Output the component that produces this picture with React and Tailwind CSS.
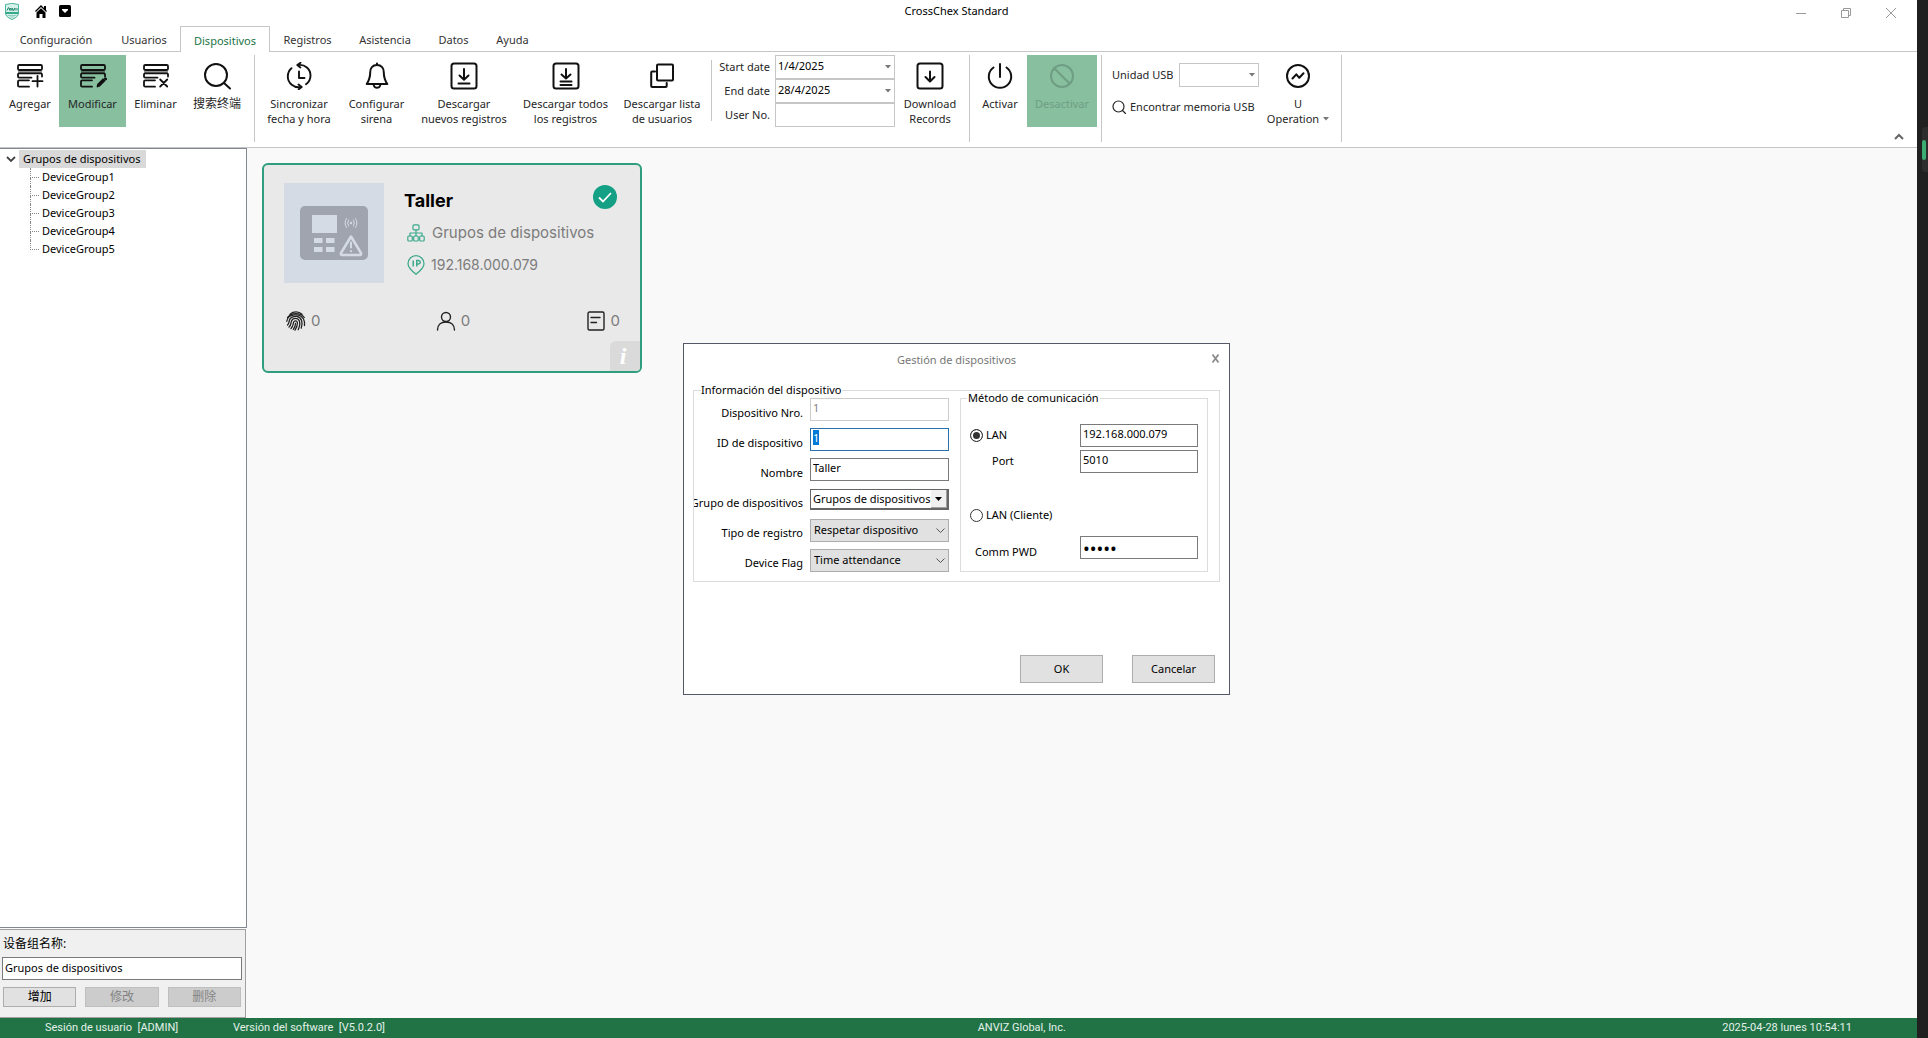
import { useEffect, useRef } from "react";

const Svg = ({ size = 28, children, ...rest }) => (
  <svg
    width={size}
    height={size}
    viewBox={`0 0 ${size} ${size}`}
    fill="none"
    stroke="currentColor"
    strokeWidth="2"
    strokeLinecap="round"
    strokeLinejoin="round"
    aria-hidden="true"
    {...rest}
  >
    {children}
  </svg>
);

/* ---------- ribbon icons ---------- */

const ListBase = ({ children }) => (
  <Svg strokeWidth="1.8">
    <path d="M2 8.5h24v2.5H2z" fill="currentColor" fillOpacity=".45" stroke="none" />
    <rect x="2" y="3" width="24" height="5" rx="1.2" />
    <path d="M26 14.5v-2a1.2 1.2 0 0 0-1.2-1.2H3.2A1.2 1.2 0 0 0 2 12.5v2a1.2 1.2 0 0 0 1.2 1.2H15.5" />
    <path d="M13 18.3H3.2A1.2 1.2 0 0 0 2 19.5v4a1.2 1.2 0 0 0 1.2 1.2H13" />
    {children}
  </Svg>
);
const AddIcon = () => (
  <ListBase>
    <path d="M21.5 14v10.5M16.5 19.2h10" />
  </ListBase>
);
const EditIcon = () => (
  <ListBase>
    <path d="M18.5 24.5l.6-2.2 5-5 1.4 1.4-5 5z" fill="currentColor" />
    <path d="M26.3 16.6l.4.4" strokeWidth="2.6" />
  </ListBase>
);
const DeleteIcon = () => (
  <ListBase>
    <path d="M18.2 17.5l7 7M25.2 17.5l-7 7" />
  </ListBase>
);
const SearchIcon = () => (
  <Svg>
    <circle cx="13" cy="13" r="11" />
    <path d="M21 21l6 5.5" />
  </Svg>
);
const SyncIcon = () => (
  <Svg strokeWidth="1.9">
    <path d="M13 3c7-1 12.5 4 12.5 10.5 0 4-2 7-4.500 8.800" />
    <path d="M16 25C9 26.500 2.800 21 2.800 14.500c0-3.500 1.500-6.500 3.700-8.300" />
    <path d="M15.500.8L12.300 3l3 2.500M13.500 22.500l3.200 2.500-3 2.200" />
    <path d="M14 9.500v6.500h5.500" />
  </Svg>
);
const BellIcon = () => (
  <Svg>
    <path d="M14 2.500v-1M14 3c-4.500 0-6.800 3.200-6.800 7.500 0 6-1.500 8.500-3.500 11.500h20.600c-2-3-3.500-5.500-3.500-11.500C20.800 6.200 18.500 3 14 3z" />
    <path d="M10.800 23.500c.6 1.700 1.800 2.300 3.200 2.300s2.600-.6 3.200-2.300" />
  </Svg>
);
const BoxDown = ({ children }) => (
  <Svg>
    <rect x="1.5" y="1.5" width="25" height="25" rx="2.5" />
    {children}
  </Svg>
);
const DownOneIcon = () => (
  <BoxDown>
    <path d="M14 7v10.500M9.500 13.500l4.500 4.200 4.500-4.200M8.500 21.500h11" />
  </BoxDown>
);
const DownAllIcon = () => (
  <BoxDown>
    <path d="M14 7v9M9.500 12.500l4.500 4 4.500-4M8.500 19.500h11M8.500 23h11" />
  </BoxDown>
);
const DownIcon = () => (
  <BoxDown>
    <path d="M14 9.500v9.500M9.500 15l4.500 4.500 4.500-4.500" />
  </BoxDown>
);
const CopyIcon = () => (
  <Svg>
    <rect x="9" y="2.5" width="16" height="16" rx="1" />
    <path d="M7 9.500H4.200a1 1 0 0 0-1 1V24a1 1 0 0 0 1 1h13.500a1 1 0 0 0 1-1v-3" />
  </Svg>
);
const PowerIcon = () => (
  <Svg>
    <path d="M14 2v13M7.500 5.500a11.200 11.200 0 1 0 13 0" />
  </Svg>
);
const BanIcon = () => (
  <Svg>
    <circle cx="14" cy="14" r="11" />
    <path d="M6.200 6.200l15.600 15.600" />
  </Svg>
);
const PulseIcon = () => (
  <Svg>
    <circle cx="14" cy="14" r="11" />
    <path d="M8.500 16.500l3.800-4.200 3 3.500 4.200-4.500" />
  </Svg>
);

/* ---------- shared controls ---------- */

const Caret = ({ className = "" }) => (
  <svg width="6" height="4" viewBox="0 0 6 4" className={className} aria-hidden="true">
    <path d="M0 0h6L3 3.500z" fill="#777" />
  </svg>
);

function RibbonButton({ icon, lines, width, textSize = "", active, disabled, menu }) {
  return (
    <button
      type="button"
      disabled={disabled}
      className={`flex h-[72px] shrink-0 flex-col items-center pt-[7px] ${width} ${
        active ? "bg-[#87bf9f]" : ""
      } ${disabled ? "text-[#6f9e84]" : "text-[#262626]"}`}
    >
      <span className={disabled ? "" : "text-[#111]"}>{icon}</span>
      <span className={`mt-1.5 text-center whitespace-nowrap ${textSize}`}>
        {lines.map((line, i) => (
          <span key={line} className="block leading-[15px]">
            {line}
            {menu && i === lines.length - 1 && <Caret className="mb-[3px] ml-1 inline-block" />}
          </span>
        ))}
      </span>
    </button>
  );
}

const Separator = ({ className = "" }) => (
  <div className={`w-px shrink-0 bg-[#c6c6c6] ${className}`} />
);

function RibbonCombo({ id, value, width }) {
  return (
    <div className={`relative ${width}`}>
      <select
        id={id}
        className="h-6 w-full appearance-none border border-[#c6c6c6] bg-white pr-4 pb-0.5 pl-0.5 text-black"
      >
        <option>{value}</option>
      </select>
      <Caret className="pointer-events-none absolute top-2.5 right-1" />
    </div>
  );
}

/* ---------- window chrome ---------- */

function TitleBar() {
  return (
    <header className="grid h-[26px] grid-cols-3 pr-1">
      <div className="flex items-start gap-4 pl-[5px]">
        <svg width="14" height="17" viewBox="0 0 14 17" className="mt-[3px]" aria-hidden="true">
          <path d="M.5 1.500Q7-.8 13.500 1.500V10q0 4-6.500 6.500Q.5 14 .5 10z" fill="#d8f1ea" stroke="#4fb59c" />
          <path d="M.5 9h13v2H.5z" fill="#36a98c" />
          <path d="M2 7.500L3.500 4.500 5 7.500V5l2 2.500V5l1.500 2.500L10 5v2.500M12 5v2.500" fill="none" stroke="#23876d" />
          <path d="M2.500 12.500h9M4.500 14h5" stroke="#8fd0c0" />
        </svg>
        <button type="button" aria-label="Inicio" className="mt-[5px]">
          <svg width="12" height="13" viewBox="0 0 12 13">
            <path d="M9 1h2v4H9z" />
            <path d="M6 0l6 6-.9 1L6 2 .9 7 0 6z" />
            <path d="M6 3.200l4.500 4.300V13H7.500V9h-3v4h-3V7.500z" />
          </svg>
        </button>
        <button type="button" aria-label="Personalizar" className="mt-[5px] -ml-1">
          <svg width="12" height="12" viewBox="0 0 12 12">
            <rect width="12" height="12" rx="1.5" />
            <path d="M3 4h6v1L6 8 3 5z" fill="#fff" />
          </svg>
        </button>
      </div>
      <h1 className="pt-[3px] text-center leading-[15px] text-black">CrossChex Standard</h1>
      <div className="flex justify-end text-[#9a9a9a]">
        <button type="button" aria-label="Minimizar" className="grid w-[45px] place-items-center">
          <svg width="10" height="10"><path d="M0 5.500h10" stroke="currentColor" /></svg>
        </button>
        <button type="button" aria-label="Restaurar" className="grid w-[45px] place-items-center">
          <svg width="10" height="10" fill="none" stroke="currentColor">
            <path d="M.5 2.500h7v7h-7zM2.500 2.500v-2h7v7h-2" />
          </svg>
        </button>
        <button type="button" aria-label="Cerrar" className="grid w-[45px] place-items-center">
          <svg width="10" height="10"><path d="M0 0l10 10M10 0L0 10" stroke="currentColor" /></svg>
        </button>
      </div>
    </header>
  );
}

const TABS = [
  ["Configuración", "w-[104px]"],
  ["Usuarios", "w-[72px]"],
  ["Dispositivos", "w-[90px]"],
  ["Registros", "w-[75px]"],
  ["Asistencia", "w-[80px]"],
  ["Datos", "w-[57px]"],
  ["Ayuda", "w-[61px]"],
];

function Tabs() {
  return (
    <nav className="flex h-[26px]">
      <div className="w-1 border-b border-[#c6c6c6]" />
      {TABS.map(([name, width]) => (
        <button
          key={name}
          type="button"
          className={`${width} border-[#c6c6c6] pt-1 ${
            name === "Dispositivos" ? "border border-b-0 text-[#217346]" : "border-b text-[#333]"
          }`}
        >
          {name}
        </button>
      ))}
      <div className="flex-1 border-b border-[#c6c6c6]" />
    </nav>
  );
}

function Ribbon() {
  return (
    <section className="flex h-24 items-start border-b border-[#c6c6c6] pt-[3px] text-[#262626]">
      <div className="flex pl-px">
        <RibbonButton icon={<AddIcon />} lines={["Agregar"]} width="w-[58px]" />
        <RibbonButton icon={<EditIcon />} lines={["Modificar"]} width="w-[67px]" active />
        <RibbonButton icon={<DeleteIcon />} lines={["Eliminar"]} width="w-[59px]" />
        <RibbonButton icon={<SearchIcon />} lines={["搜索终端"]} width="w-[64px]" textSize="text-xs" />
      </div>
      <Separator className="ml-[5px] h-[87px]" />
      <div className="flex pl-[3px]">
        <RibbonButton icon={<SyncIcon />} lines={["Sincronizar", "fecha y hora"]} width="w-[82px]" />
        <RibbonButton icon={<BellIcon />} lines={["Configurar", "sirena"]} width="w-[73px]" />
        <RibbonButton icon={<DownOneIcon />} lines={["Descargar", "nuevos registros"]} width="w-[102px]" />
        <RibbonButton icon={<DownAllIcon />} lines={["Descargar todos", "los registros"]} width="w-[101px]" />
        <RibbonButton icon={<CopyIcon />} lines={["Descargar lista", "de usuarios"]} width="w-[92px]" />
      </div>
      <Separator className="mt-[5px] ml-[3px] h-[61px]" />
      <div className="grid grid-cols-[58px_120px] items-center gap-x-[5px]">
        <label htmlFor="start" className="text-right">Start date</label>
        <RibbonCombo id="start" value="1/4/2025" width="w-full" />
        <label htmlFor="end" className="text-right">End date</label>
        <RibbonCombo id="end" value="28/4/2025" width="w-full" />
        <label htmlFor="userno" className="text-right">User No.</label>
        <input id="userno" className="h-6 w-full border border-[#c6c6c6] bg-white px-1" />
      </div>
      <RibbonButton icon={<DownIcon />} lines={["Download", "Records"]} width="w-[70px]" />
      <Separator className="ml-1 h-[87px]" />
      <div className="flex pl-[3px]">
        <RibbonButton icon={<PowerIcon />} lines={["Activar"]} width="w-[54px]" />
        <RibbonButton icon={<BanIcon />} lines={["Desactivar"]} width="w-[70px]" active disabled />
      </div>
      <Separator className="ml-1 h-[87px]" />
      <div className="flex w-[157px] flex-col gap-3 pt-2 pl-2.5">
        <div className="flex items-center justify-between">
          <label htmlFor="usb">Unidad USB</label>
          <RibbonCombo id="usb" value="" width="w-20" />
        </div>
        <button type="button" className="flex items-center gap-1 leading-4 whitespace-nowrap">
          <Svg size={14} strokeWidth="1.2">
            <circle cx="6.5" cy="6.5" r="5.5" />
            <path d="M10.500 10.500l3 3" />
          </Svg>
          Encontrar memoria USB
        </button>
      </div>
      <RibbonButton icon={<PulseIcon />} lines={["U", "Operation"]} width="w-[78px]" menu />
      <Separator className="ml-1 h-[87px]" />
      <button type="button" aria-label="Contraer cinta" className="mt-auto mr-[13px] mb-1.5 ml-auto">
        <svg width="10" height="8" viewBox="0 0 10 8" fill="none" stroke="#666" strokeWidth="2">
          <path d="M1 6l4-4 4 4" />
        </svg>
      </button>
    </section>
  );
}

/* ---------- left panel ---------- */

const GROUPS = ["DeviceGroup1", "DeviceGroup2", "DeviceGroup3", "DeviceGroup4", "DeviceGroup5"];

function Sidebar() {
  return (
    <aside className="flex w-[247px] shrink-0 flex-col">
      <div className="flex-1 border-t border-r border-b border-[#828790] bg-white pt-px text-black">
        <div className="flex h-[18px] items-center">
          <svg width="10" height="7" viewBox="0 0 10 7" fill="none" stroke="#444" strokeWidth="1.8" className="mr-[3px] ml-1.5">
            <path d="M1 1l4 4 4-4" />
          </svg>
          <span className="bg-[#d9d9d9] pr-1.5 pl-1 leading-[18px]">Grupos de dispositivos</span>
        </div>
        <ul className="pl-[30px]">
          {GROUPS.map((group, i) => (
            <li key={group} className="flex h-[18px] items-center gap-[3px]">
              <span className="h-[18px] w-[9px]">
                <span className="block h-2.5 border-b border-l border-dotted border-[#888]" />
                {i < GROUPS.length - 1 && (
                  <span className="block h-2 border-l border-dotted border-[#888]" />
                )}
              </span>
              {group}
            </li>
          ))}
        </ul>
      </div>
      <form className="mt-px mr-px flex h-[89px] flex-col border-t border-r border-b border-[#a0a0a0] bg-[#f0f0f0] text-black">
        <label htmlFor="group" className="pt-1.5 pl-[3px] text-xs leading-4">
          设备组名称:
        </label>
        <input
          id="group"
          defaultValue="Grupos de dispositivos"
          className="mt-[5px] mr-[3px] ml-0.5 h-[23px] border border-[#7a7a7a] bg-white px-0.5 pb-0.5"
        />
        <div className="mt-[7px] mr-1 ml-[3px] grid grid-cols-3 gap-[9px] text-xs">
          <button type="button" className="h-5 border border-[#adadad] bg-[#e1e1e1] leading-none">增加</button>
          <button type="button" disabled className="h-5 border border-[#bfbfbf] bg-[#cccccc] leading-none text-[#838383]">修改</button>
          <button type="button" disabled className="h-5 border border-[#bfbfbf] bg-[#cccccc] leading-none text-[#838383]">删除</button>
        </div>
      </form>
    </aside>
  );
}

/* ---------- device card ---------- */

const TerminalPicture = () => (
  <svg width="68" height="54" viewBox="0 0 68 54" aria-hidden="true">
    <rect width="68" height="54" rx="5" fill="#a0a4ae" />
    <g fill="#d5dbe5">
      <path d="M12 9h25v18H12zM14 32h8.500v5H14zM26 32h8.500v5H26zM14 41h8.500v5H14zM26 41h8.500v5H26z" />
      <circle cx="51" cy="17" r="1.2" />
    </g>
    <g fill="none" stroke="#d5dbe5" strokeLinecap="round" strokeLinejoin="round">
      <path d="M48.500 14q-1.800 3 0 6M53.500 14q1.800 3 0 6M46.500 12.500q-3 4.500 0 9M55.500 12.500q3 4.500 0 9" />
      <path d="M51 30.500L41 47q-.6 2 1 2h18q1.600 0 1-2z" strokeWidth="2.5" />
      <path d="M51 36.500v5" strokeWidth="2" />
      <path d="M51 45v.3" strokeWidth="2" />
    </g>
  </svg>
);

const FingerprintIcon = () => (
  <Svg size={20} strokeWidth="1.3" className="text-[#222]">
    <path d="M4 3.200C7.500.1 12.800.1 16 3.200" />
    <path d="M1.500 6.500C5 1.200 15 1.200 18.300 6.500" />
    <path d="M.8 10.300C1.500 3 14 1.500 17.500 8c1.200 2.300 1.300 4.500 1 6.500" />
    <path d="M1.500 14C4 12 2.200 9.500 4.500 7.300 8 4 14 5 15.600 9.500c.8 2.500.5 5-.4 7.700" />
    <path d="M3 16c2.500-2 1.700-4 2.500-6C7 6.500 12 6.500 13.400 10c.8 2.500.2 5.700-1.200 8.700" />
    <path d="M5 17.500c2.500-2.500 2-4.500 2.600-6.300.8-2 3.300-1.700 3.700.2.400 2.600-.6 5.200-2.300 7.700" />
    <path d="M9.500 12.500c0 2.200-.8 4-2.200 5.800" />
  </Svg>
);

function DeviceCard() {
  return (
    <article className="relative w-[380px] overflow-hidden rounded-md border-2 border-[#2f9e80] bg-[#e9e9e9] px-5 pt-[18px] pb-10 font-[Inter,sans-serif] text-[15px] text-[#7c7c7c]">
      <div className="flex gap-5">
        <div className="grid h-[100px] w-[100px] shrink-0 place-items-center bg-[#d5dbe5]">
          <TerminalPicture />
        </div>
        <div className="flex-1">
          <div className="flex items-center justify-between pt-0.5 pr-[3px]">
            <h2 className="pt-1 text-lg leading-6 font-bold text-black">Taller</h2>
            <svg width="24" height="24" viewBox="0 0 24 24" className="mb-1" aria-hidden="true">
              <circle cx="12" cy="12" r="12" fill="#14a085" />
              <path d="M6 12.500l4 4 8-8.500" fill="none" stroke="#fff" strokeWidth="1.8" />
            </svg>
          </div>
          <p className="mt-2.5 flex items-center gap-[7px] pl-[3px] leading-5 whitespace-nowrap">
            <Svg size={18} strokeWidth="1.2" className="text-[#3aa98a]">
              <rect x="6" y=".8" width="6" height="5" rx="1" />
              <rect x=".8" y="12" width="4.5" height="5" rx="1" />
              <rect x="6.7" y="12" width="4.5" height="5" rx="1" />
              <rect x="12.7" y="12" width="4.5" height="5" rx="1" />
              <path d="M9 6v6M3 12V9h12v3" />
            </Svg>
            Grupos de dispositivos
          </p>
          <p className="mt-3 flex items-center gap-1.5 pl-[3px] text-sm leading-5">
            <svg width="18" height="20" viewBox="0 0 18 20" fill="none" stroke="#3aa98a" strokeWidth="1.3" aria-hidden="true">
              <path d="M9 19.200Q1 13 1 8.700a8 8 0 0 1 16 0Q17 13 9 19.200z" />
              <path d="M6.200 5.500v6M9.800 11.500v-6h1.700a1.700 1.700 0 0 1 0 3.500H9.800" strokeWidth="1.5" />
            </svg>
            192.168.000.079
          </p>
        </div>
      </div>
      <div className="mt-7 flex items-center justify-between">
        <span className="flex items-center gap-[5px] pl-0.5 leading-5">
          <FingerprintIcon />0
        </span>
        <span className="flex items-center gap-[5px] leading-5">
          <Svg size={20} strokeWidth="1.4" className="text-[#222]">
            <circle cx="10" cy="6" r="4.5" />
            <path d="M1.500 19c0-5 3.500-8 8.500-8s8.500 3 8.500 8" />
          </Svg>
          0
        </span>
        <span className="flex items-center gap-[5px] leading-5">
          <Svg size={20} strokeWidth="1.4" className="text-[#222]">
            <rect x="2" y="1" width="16" height="18" rx="1.5" />
            <path d="M5 6.500h9M5 11.500h5.500" />
          </Svg>
          0
        </span>
      </div>
      <button
        type="button"
        aria-label="Información"
        className="absolute right-0 bottom-0 h-[30px] w-[30px] rounded-tl-md bg-[#dadada] pr-1 font-['Liberation_Serif',serif] text-2xl leading-none font-bold text-white italic"
      >
        i
      </button>
    </article>
  );
}

/* ---------- dialog ---------- */

const FIELD = "h-[23px] w-full border bg-white px-0.5 pb-1";

function Row({ id, label, children }) {
  return (
    <div className="grid h-[30px] grid-cols-[109px_139px] items-start gap-[7px]">
      <label htmlFor={id} className="flex justify-end overflow-hidden pt-[7px] leading-4 whitespace-nowrap">
        {label}
      </label>
      {children}
    </div>
  );
}

function FlatSelect({ id, value }) {
  return (
    <div className="relative mt-px">
      <select id={id} className="h-[23px] w-full appearance-none border border-[#adadad] bg-[#e1e1e1] pb-px pl-[3px] text-black">
        <option>{value}</option>
      </select>
      <svg width="9" height="6" viewBox="0 0 9 6" fill="none" stroke="#555" className="pointer-events-none absolute top-[9px] right-1">
        <path d="M.5 .5l4 4 4-4" />
      </svg>
    </div>
  );
}

const RADIO =
  "h-[13px] w-[13px] appearance-none rounded-full border border-[#333] bg-white checked:bg-[#333] checked:shadow-[inset_0_0_0_2px_white]";

function DeviceDialog() {
  const idField = useRef(null);
  useEffect(() => {
    idField.current.focus();
    idField.current.select();
  }, []);

  return (
    <div
      role="dialog"
      aria-labelledby="dialog-title"
      className="w-[547px] border border-[#555866] bg-white px-[9px] pb-[11px] text-black"
    >
      <div className="grid h-[39px] grid-cols-[1fr_auto_1fr] items-start">
        <h2 id="dialog-title" className="col-start-2 pt-2 leading-4 text-[#777]">
          Gestión de dispositivos
        </h2>
        <button type="button" aria-label="Cerrar" className="justify-self-end pt-[9px]">
          <svg width="9" height="11" viewBox="0 0 9 11" fill="none" stroke="#8c8c8c" strokeWidth="1.8">
            <path d="M1.500 1.500l6 8M7.500 1.500l-6 8" />
          </svg>
        </button>
      </div>

      <fieldset className="border border-[#dcdcdc] pb-[3px]">
        <legend className="ml-[7px] h-[14px] leading-[14px]">Información del dispositivo</legend>
        <div className="flex gap-[11px]">
          <div className="pt-px">
            <Row id="number" label="Dispositivo Nro.">
              <input id="number" disabled defaultValue="1" className={`${FIELD} border-[#cccccc] text-[#838383]`} />
            </Row>
            <Row id="device-id" label="ID de dispositivo">
              <input
                id="device-id"
                ref={idField}
                defaultValue="1"
                className={`${FIELD} border-[#2a6fa8] outline-none selection:bg-[#0078d7] selection:text-white`}
              />
            </Row>
            <Row id="name" label="Nombre">
              <input id="name" defaultValue="Taller" className={`${FIELD} border-[#7a7a7a]`} />
            </Row>
            <Row id="device-group" label="Grupo de dispositivos">
              <div className="relative mt-px">
                <select id="device-group" className="h-[21px] w-full appearance-none border border-r-2 border-b-2 border-[#666] bg-white pl-0.5 text-black">
                  <option>Grupos de dispositivos</option>
                </select>
                <span className="pointer-events-none absolute top-px right-0.5 grid h-[18px] w-4 place-items-center border-r border-b border-[#a0a0a0] bg-[#f0f0f0]">
                  <svg width="7" height="4" viewBox="0 0 7 4"><path d="M0 0h7L3.500 4z" /></svg>
                </span>
              </div>
            </Row>
            <Row id="record-type" label="Tipo de registro">
              <FlatSelect id="record-type" value="Respetar dispositivo" />
            </Row>
            <Row id="flag" label="Device Flag">
              <FlatSelect id="flag" value="Time attendance" />
            </Row>
          </div>

          <fieldset className="-mt-1.5 h-[181px] w-[248px] border border-[#dcdcdc] pr-2 pl-[9px]">
            <legend className="-ml-[3px] h-[14px] px-px leading-[14px]">Método de comunicación</legend>
            <div className="grid grid-cols-[110px_118px] gap-y-[3px] pt-[19px]">
              <label className="flex items-center gap-[3px]">
                <input type="radio" name="method" defaultChecked className={RADIO} />
                LAN
              </label>
              <input aria-label="Dirección IP" defaultValue="192.168.000.079" className={`${FIELD} border-[#7a7a7a]`} />
              <label htmlFor="port" className="self-center pl-[22px]">Port</label>
              <input id="port" defaultValue="5010" className={`${FIELD} border-[#7a7a7a]`} />
            </div>
            <label className="mt-[34px] flex h-4 items-center gap-[3px]">
              <input type="radio" name="method" className={RADIO} />
              LAN (Cliente)
            </label>
            <div className="mt-[13px] grid grid-cols-[110px_118px]">
              <label htmlFor="pwd" className="pt-2 pl-[5px] leading-4">Comm PWD</label>
              <input
                id="pwd"
                type="password"
                defaultValue="12345"
                className="h-[23px] w-full border border-[#7a7a7a] bg-white px-0.5 text-lg leading-none"
              />
            </div>
          </fieldset>
        </div>
      </fieldset>

      <div className="mt-[73px] flex justify-end gap-[29px] pr-[5px]">
        <button type="button" className="h-7 w-[83px] border border-[#adadad] bg-[#e1e1e1]">OK</button>
        <button type="button" className="h-7 w-[83px] border border-[#adadad] bg-[#e1e1e1]">Cancelar</button>
      </div>
    </div>
  );
}

function StatusBar() {
  return (
    <footer className="flex h-5 items-center bg-[#217346] pt-px pr-[65px] pl-[45px] font-[Roboto,sans-serif] whitespace-pre text-[#e4f1e9]">
      <span className="w-[188px]">Sesión de usuario  [ADMIN]</span>
      <span className="flex-1">Versión del software  [V5.0.2.0]</span>
      <span className="flex-1">ANVIZ Global, Inc.</span>
      <time>2025-04-28 lunes 10:54:11</time>
    </footer>
  );
}

export default function App() {
  return (
    <div className="flex h-screen w-full bg-[#202020] font-['Noto_Sans','Noto_Sans_CJK_SC',sans-serif] text-[11px]">
      <div className="relative flex min-w-0 flex-1 flex-col bg-white">
        <TitleBar />
        <Tabs />
        <Ribbon />
        <div className="flex min-h-0 flex-1 bg-[#f9f9f9]">
          <Sidebar />
          <main className="flex-1 p-[15px]">
            <DeviceCard />
          </main>
        </div>
        <StatusBar />
        <div className="pointer-events-none absolute inset-0 flex items-center justify-center pr-1">
          <div className="pointer-events-auto">
            <DeviceDialog />
          </div>
        </div>
      </div>
      <div className="w-[11px] shrink-0 pt-[127px] pl-[5px]">
        <div className="h-[45px] rounded-l bg-[#2d2d2d] pt-[13px]">
          <div className="h-5 w-1 rounded-full bg-[#3aad72]" />
        </div>
      </div>
    </div>
  );
}
